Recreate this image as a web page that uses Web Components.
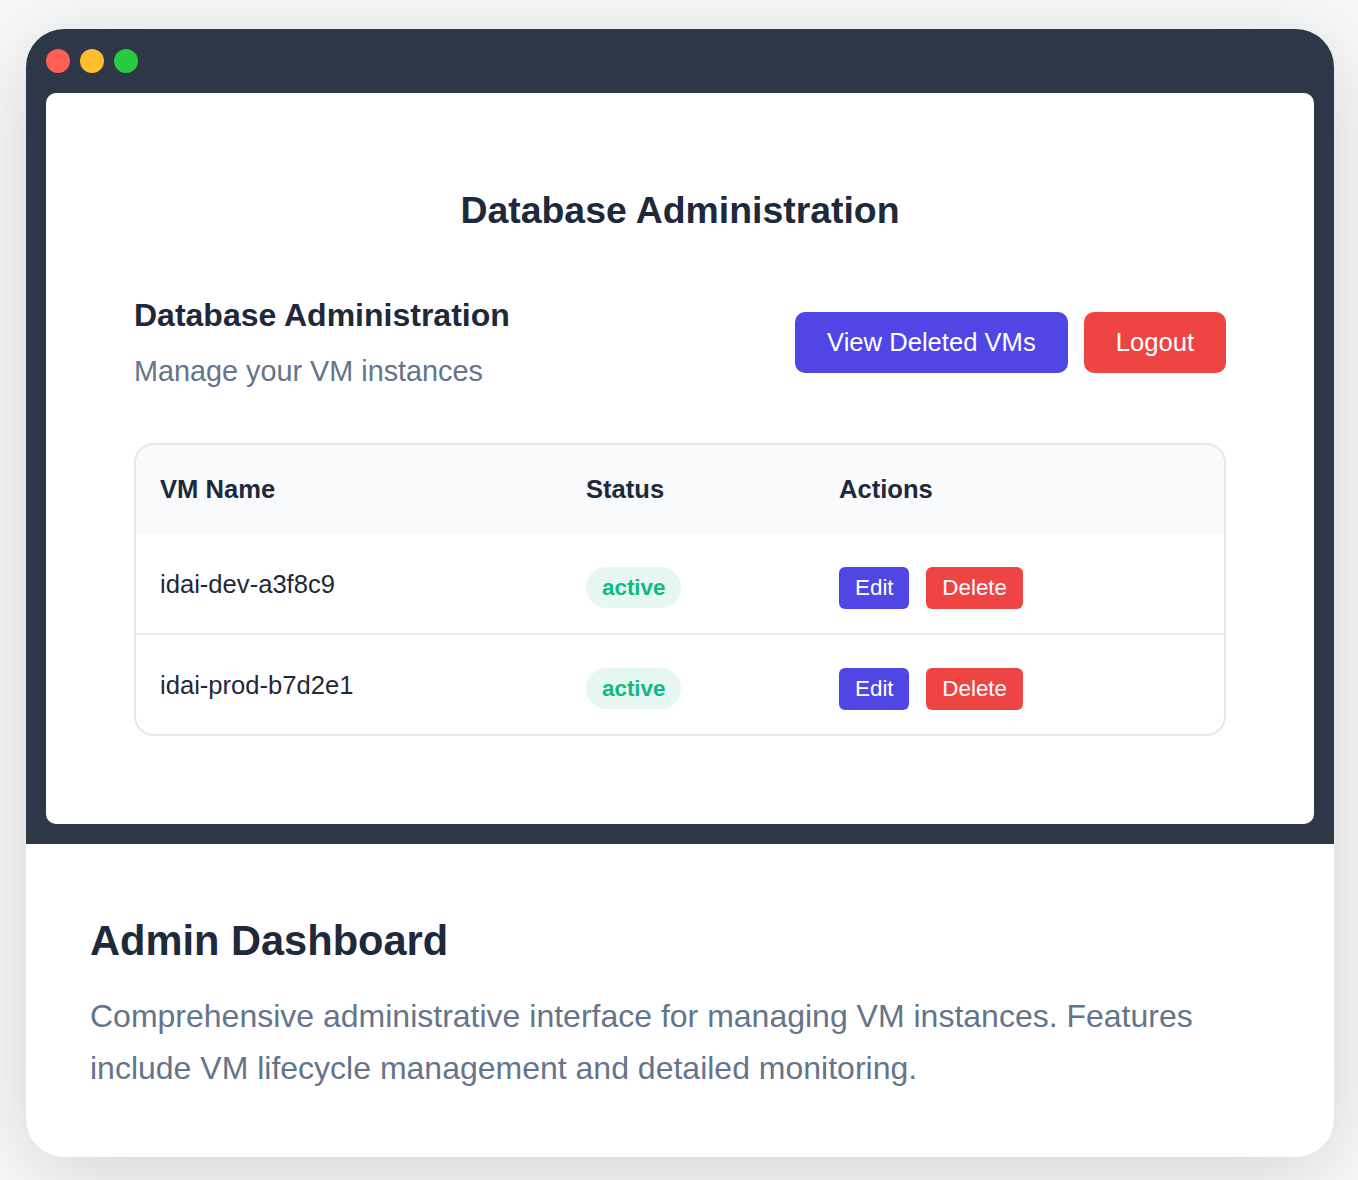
<!DOCTYPE html>
<html lang="en">
<head>
<meta charset="utf-8">
<title>Admin Dashboard</title>
<style>
  html, body { margin: 0; padding: 0; }
  body {
    width: 1358px;
    height: 1180px;
    overflow: hidden;
    background: #f8f9fb;
    font-family: "Liberation Sans", Arial, sans-serif;
  }
</style>
</head>
<body>
<showcase-card>
  <admin-panel></admin-panel>
  <span slot="title">Admin Dashboard</span>
  <span slot="desc">Comprehensive administrative interface for managing VM instances. Features include VM lifecycle management and detailed monitoring.</span>
</showcase-card>

<script>
  class ShowcaseCard extends HTMLElement {
    constructor() {
      super();
      this.attachShadow({ mode: 'open' });
      this.shadowRoot.innerHTML = `
        <style>
          :host {
            display: block;
            box-sizing: border-box;
            width: 1308px;
            height: 1128px;
            margin: 29px 0 0 26px;
            background: #fff;
            border-radius: 38px;
            overflow: hidden;
            box-shadow: 0 16px 90px rgba(0, 0, 0, 0.16);
          }
          .frame {
            background: #2d3748;
            padding: 20px;
          }
          .dots { display: flex; gap: 10px; margin-bottom: 20px; }
          .dots i { width: 24px; height: 24px; border-radius: 50%; }
          .info { padding: 72px 64px 0; }
          h2 {
            margin: 0 0 24px;
            font-size: 41.6px;
            line-height: 50px;
            font-weight: 700;
            color: #1e293b;
          }
          p {
            margin: 0;
            font-size: 32px;
            line-height: 52px;
            color: #64748b;
          }
        </style>
        <div class="frame">
          <div class="dots">
            <i style="background:#ff5f57"></i>
            <i style="background:#ffbd2e"></i>
            <i style="background:#28ca42"></i>
          </div>
          <slot></slot>
        </div>
        <div class="info">
          <h2><slot name="title"></slot></h2>
          <p><slot name="desc"></slot></p>
        </div>
      `;
    }
  }

  class AdminButton extends HTMLElement {
    constructor() {
      super();
      this.attachShadow({ mode: 'open' });
      this.shadowRoot.innerHTML = `
        <style>
          :host {
            display: inline-flex;
            align-items: center;
            box-sizing: border-box;
            height: 61px;
            padding: 0 32px;
            border-radius: 10px;
            background: #4f46e5;
            color: #fff;
            font-size: 25.6px;
          }
          :host([danger]) { background: #ef4444; }
          :host([small]) {
            height: 42px;
            padding: 0 15.7px 0 16px;
            border-radius: 6px;
            font-size: 22.4px;
          }
        </style>
        <slot></slot>
      `;
    }
  }

  class StatusBadge extends HTMLElement {
    constructor() {
      super();
      this.attachShadow({ mode: 'open' });
      this.shadowRoot.innerHTML = `
        <style>
          :host {
            display: inline-flex;
            align-items: center;
            box-sizing: border-box;
            height: 41px;
            padding: 0 15.6px 0 16px;
            border-radius: 21px;
            background: #e6f7f1;
            color: #10b981;
            font-size: 22.4px;
            font-weight: 700;
          }
        </style>
        <slot></slot>
      `;
    }
  }

  class VmRow extends HTMLElement {
    constructor() {
      super();
      this.attachShadow({ mode: 'open' });
      this.shadowRoot.innerHTML = `
        <style>
          :host {
            display: grid;
            grid-template-columns: 426px 253px 1fr;
            box-sizing: border-box;
            height: 101px;
            padding: 33px 24px 0;
            border-bottom: 2px solid #e2e8f0;
            color: #1e293b;
            font-size: 25.6px;
          }
          :host(:last-child) { border-bottom: 0; height: 99px; }
          .name { line-height: 34px; }
          .actions { display: flex; gap: 17px; align-items: flex-start; }
        </style>
        <div class="name"></div>
        <div><status-badge></status-badge></div>
        <div class="actions">
          <admin-button small>Edit</admin-button>
          <admin-button small danger>Delete</admin-button>
        </div>
      `;
      this.shadowRoot.querySelector('.name').textContent = this.getAttribute('name');
      this.shadowRoot.querySelector('status-badge').textContent = this.getAttribute('status');
    }
  }

  class VmTable extends HTMLElement {
    constructor() {
      super();
      this.attachShadow({ mode: 'open' });
      this.shadowRoot.innerHTML = `
        <style>
          :host {
            display: block;
            box-sizing: border-box;
            border: 2px solid #e2e8f0;
            border-radius: 20px;
            overflow: hidden;
          }
          .head {
            display: grid;
            grid-template-columns: 426px 253px 1fr;
            align-items: center;
            height: 89px;
            padding: 0 24px;
            background: #f8fafc;
            color: #1e293b;
            font-size: 25.6px;
            font-weight: 700;
          }
        </style>
        <div class="head">
          <div>VM Name</div>
          <div>Status</div>
          <div>Actions</div>
        </div>
        <slot></slot>
      `;
    }
  }

  class AdminPanel extends HTMLElement {
    constructor() {
      super();
      this.attachShadow({ mode: 'open' });
      this.shadowRoot.innerHTML = `
        <style>
          :host {
            display: block;
            box-sizing: border-box;
            height: 731px;
            padding: 96px 88px 0;
            background: #fff;
            border-radius: 10px;
          }
          h1 {
            margin: 0 0 64px;
            text-align: center;
            font-size: 37.4px;
            line-height: 43px;
            font-weight: 700;
            color: #1e293b;
          }
          .top {
            display: flex;
            justify-content: space-between;
            align-items: flex-start;
            margin-bottom: 54px;
          }
          h2 {
            margin: 0 0 19px;
            font-size: 32px;
            line-height: 38px;
            font-weight: 700;
            color: #1e293b;
          }
          .sub { font-size: 28.8px; line-height: 36px; color: #64748b; }
          .buttons { display: flex; gap: 16px; margin-top: 15.5px; }
        </style>
        <h1>Database Administration</h1>
        <div class="top">
          <div>
            <h2>Database Administration</h2>
            <div class="sub">Manage your VM instances</div>
          </div>
          <div class="buttons">
            <admin-button>View Deleted VMs</admin-button>
            <admin-button danger>Logout</admin-button>
          </div>
        </div>
        <vm-table>
          <vm-row name="idai-dev-a3f8c9" status="active"></vm-row>
          <vm-row name="idai-prod-b7d2e1" status="active"></vm-row>
        </vm-table>
      `;
    }
  }

  customElements.define('admin-button', AdminButton);
  customElements.define('status-badge', StatusBadge);
  customElements.define('vm-row', VmRow);
  customElements.define('vm-table', VmTable);
  customElements.define('admin-panel', AdminPanel);
  customElements.define('showcase-card', ShowcaseCard);
</script>
</body>
</html>
